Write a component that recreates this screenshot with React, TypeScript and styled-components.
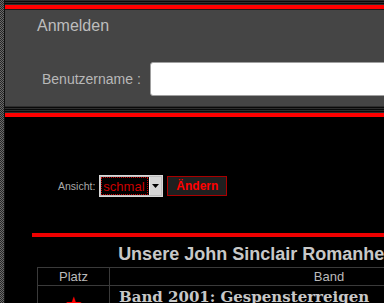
import styled, { createGlobalStyle } from 'styled-components'

const GlobalStyle = createGlobalStyle`
	html, body {
		margin: 0;
		overflow: hidden;
	}
	body {
		background: repeating-conic-gradient(#6a6a6a 0 25%, #262626 0 50%) 0 0 / 2px 2px;
		font-family: "Liberation Sans", Arial, sans-serif;
	}
`

export default function App() {
	return (
		<>
			<GlobalStyle />
			<Page>
				<Stripes $height={5} />
				<RedBar />
				<LoginPanel>
					<PanelTitle>Anmelden</PanelTitle>
					<LoginRow>
						<LoginLabel>Benutzername :</LoginLabel>
						<TextInput type="text" />
					</LoginRow>
				</LoginPanel>
				<Stripes $height={7} />
				<RedBar />

				<ViewForm>
					<ViewLabel>Ansicht:</ViewLabel>
					<SelectBox>
						<SelectValue>schmal</SelectValue>
						<SelectArrow>
							<svg width="7" height="4" viewBox="0 0 7 4">
								<path d="M0 0h7L3.5 4z" fill="#000" />
							</svg>
						</SelectArrow>
					</SelectBox>
					<ChangeButton type="button">Ändern</ChangeButton>
				</ViewForm>

				<Divider />

				<Ranking>
					<RankTable>
						<Caption>Unsere John Sinclair Romanhefte Top 10</Caption>
						<thead>
							<tr>
								<HeadCell $width={71}>Platz</HeadCell>
								<HeadCell>Band</HeadCell>
							</tr>
						</thead>
						<tbody>
							<tr>
								<PlaceCell>★</PlaceCell>
								<BandCell>
									<BandTitle>Band 2001: Gespensterreigen</BandTitle>
								</BandCell>
							</tr>
						</tbody>
					</RankTable>
				</Ranking>
			</Page>
		</>
	)
}

const Page = styled.div`
	margin-left: 4px;
	border-left: 1px solid #111;
	background: #000;
	min-height: 100vh;
`

const Stripes = styled.div<{ $height: number }>`
	height: ${(p) => p.$height}px;
	background: repeating-linear-gradient(to bottom, #2e2e2e 0 1px, #0a0a0a 1px 2px);
`

const RedBar = styled.div`
	height: 4px;
	background: #f00;
`

const LoginPanel = styled.section`
	box-sizing: border-box;
	height: 97px;
	padding: 6px 0 0 32px;
	background: #454545;
	border-top: 1px solid #1a1a1a;
	overflow: hidden;
`

const PanelTitle = styled.h2`
	margin: 0;
	font-size: 16px;
	line-height: 19px;
	font-weight: normal;
	color: #bdbdbd;
`

const LoginRow = styled.div`
	display: flex;
	align-items: center;
	gap: 9px;
	margin-top: 27px;
	padding-left: 5px;
`

const LoginLabel = styled.label`
	font-size: 14px;
	color: #b8b8b8;
	white-space: nowrap;
`

const TextInput = styled.input`
	flex: none;
	box-sizing: border-box;
	width: 260px;
	height: 34px;
	border: 1px solid #a0a0a0;
	border-radius: 3px;
	background: #fff;
`

const ViewForm = styled.form`
	display: flex;
	align-items: center;
	margin: 58px 0 0;
	padding-left: 53px;
`

const ViewLabel = styled.span`
	font-size: 10.5px;
	color: #aaa;
	margin-right: 4px;
`

const SelectBox = styled.div`
	box-sizing: border-box;
	display: flex;
	align-items: stretch;
	width: 64px;
	height: 22px;
	padding: 1px;
	border: 1px solid #d8d8d8;
	background: #000;
	box-shadow: inset 0 0 0 1px #bdbdbd;
`

const SelectValue = styled.span`
	flex: 1;
	display: flex;
	align-items: center;
	padding-left: 2px;
	outline: 1px dotted #c00;
	outline-offset: -1px;
	font-size: 13px;
	color: #c00;
	white-space: nowrap;
	overflow: hidden;
`

const SelectArrow = styled.span`
	display: flex;
	align-items: center;
	justify-content: center;
	width: 11px;
	margin-left: 1px;
	background: #d6d6d6;
	border-left: 1px solid #f0f0f0;
`

const ChangeButton = styled.button`
	box-sizing: border-box;
	width: 60px;
	height: 20px;
	margin-left: 4px;
	padding: 0;
	background: #1f1f1f;
	border: 1px solid #a00;
	color: #f00;
	font-family: "Liberation Sans", Arial, sans-serif;
	font-size: 12px;
	font-weight: bold;
`

const Divider = styled.div`
	height: 4px;
	margin: 36px 0 0 27px;
	background: #e00;
`

const Ranking = styled.section`
	padding: 6px 0 0 32px;
`

const RankTable = styled.table`
	width: 512px;
	border-collapse: collapse;
	border: 1px solid #3a3a3a;
`

const Caption = styled.caption`
	padding-bottom: 2px;
	font-size: 18px;
	line-height: 22px;
	font-weight: bold;
	color: #c8c8c8;
	white-space: nowrap;
`

const HeadCell = styled.th<{ $width?: number }>`
	width: ${(p) => (p.$width ? `${p.$width}px` : 'auto')};
	padding: 0;
	border: 1px solid #3a3a3a;
	font-size: 13px;
	line-height: 17px;
	font-weight: normal;
	color: #bbb;
`

const PlaceCell = styled.td`
	padding-top: 6px;
	border: 1px solid #3a3a3a;
	vertical-align: top;
	text-align: center;
	font-family: "DejaVu Sans", sans-serif;
	font-size: 20px;
	color: #f00;
`

const BandCell = styled.td`
	padding: 2px 0 40px 9px;
	border: 1px solid #3a3a3a;
	vertical-align: top;
`

const BandTitle = styled.div`
	font-family: "DejaVu Serif", serif;
	font-size: 15px;
	font-weight: bold;
	color: #c8c8c8;
`
